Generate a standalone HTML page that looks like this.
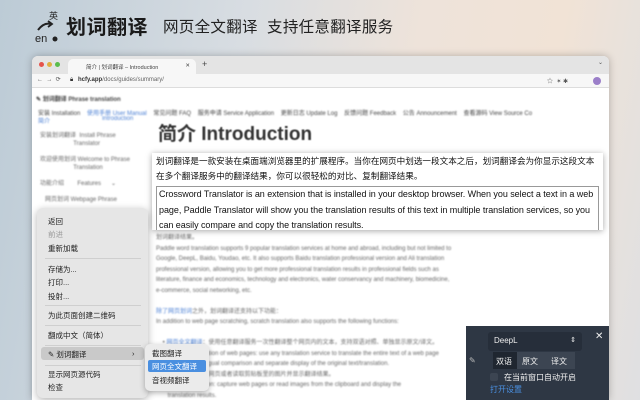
<!DOCTYPE html>
<html><head><meta charset="utf-8"><style>
*{margin:0;padding:0;box-sizing:border-box}
body{width:640px;height:400px;overflow:hidden;position:relative;font-family:"Liberation Sans","Noto Sans CJK SC",sans-serif;
background:linear-gradient(100deg,#bccbd6 0%,#d8dde2 35%,#eee3da 60%,#f1e3d6 80%,#dfe0e2 100%)}
.abs{position:absolute}
.title{left:66px;top:11px;font-size:20px;font-weight:bold;color:#1a1a1a;letter-spacing:0.5px}
.sub{left:163px;top:15px;font-size:15.5px;color:#222;letter-spacing:0.3px}
.win{left:32px;top:56px;width:577px;height:344px;background:#fff;border-radius:6px 6px 0 0;overflow:hidden;box-shadow:0 0 8px rgba(0,0,0,.25)}
.tabbar{position:absolute;left:0;top:0;width:100%;height:18px;background:#e4e4e4}
.tab{position:absolute;left:36px;top:3px;width:128px;height:15px;background:#f7f7f7;border-radius:5px 5px 0 0;font-size:5.5px;color:#444;padding:4px 0 0 18px}
.addr{position:absolute;left:0;top:18px;width:100%;height:14px;background:#f7f7f7;border-bottom:1px solid #ddd;font-size:6px;color:#333}
.blur{filter:blur(0.7px);color:#666;font-size:6px}
.box{left:152px;top:153px;width:451px;height:77px;background:#fff;box-shadow:0 1px 6px rgba(0,0,0,.35);font-size:9px;color:#111;line-height:15px;padding:1px 4px;white-space:nowrap;overflow:hidden}
.en{border:1px solid #999;margin-top:2px;padding:0 2px;line-height:15.5px;font-size:9px;letter-spacing:-0.05px}
.menu{left:37px;top:208px;width:111px;height:190px;background:#e6e6e6;border-radius:6px;box-shadow:0 2px 8px rgba(0,0,0,.3);font-size:7.5px;color:#222}
.menu div.i{position:absolute;left:11px}
.sep{position:absolute;left:8px;width:96px;height:1px;background:#cfcfcf}
.submenu{left:145px;top:344px;width:64px;height:47px;background:#ebebeb;border-radius:5px;box-shadow:0 2px 6px rgba(0,0,0,.3);font-size:7.5px;color:#222}
.panel{left:466px;top:326px;width:143px;height:74px;background:#2e3744;color:#eee;font-size:8px}
</style></head><body>
<svg class="abs" style="left:34px;top:10px" width="30" height="34" viewBox="0 0 30 34"><path d="M4 20 Q10 12 17 14" stroke="#222" stroke-width="2" fill="none"/><path d="M14 11 L18 14 L14 17" stroke="#222" stroke-width="1.8" fill="none"/><text x="15" y="9" font-size="9" fill="#222" font-family="Noto Sans CJK SC">英</text><text x="1" y="32" font-size="11" fill="#222" font-family="Liberation Sans">en</text><circle cx="21" cy="29" r="2.5" fill="#222"/></svg>
<div class="abs title">划词翻译</div>
<div class="abs sub">网页全文翻译&nbsp; 支持任意翻译服务</div>
<div class="abs win">
 <div class="tabbar">
  <span class="abs" style="left:7px;top:6px;width:5px;height:5px;border-radius:50%;background:#e5534b"></span>
  <span class="abs" style="left:15px;top:6px;width:5px;height:5px;border-radius:50%;background:#e0b040"></span>
  <span class="abs" style="left:23px;top:6px;width:5px;height:5px;border-radius:50%;background:#5bbd4c"></span>
  <div class="tab">简介 | 划词翻译 – Introduction<span style="position:absolute;right:6px">✕</span></div>
  <span class="abs" style="left:170px;top:3px;font-size:9px;color:#444">+</span>
  <span class="abs" style="right:6px;top:3px;font-size:6px;color:#555">⌄</span>
 </div>
 <div class="addr">
  <span class="abs" style="left:5px;top:2px;color:#555">←&nbsp; →&nbsp; ⟳</span>
  <span class="abs" style="left:38px;top:3px">🔒︎</span>
  <span class="abs" style="left:46px;top:3px"><b>hcfy.app</b><span style="color:#666">/docs/guides/summary/</span></span>
  <span class="abs" style="left:515px;top:2px;color:#555">☆ &nbsp;✶ ✱</span>
  <span class="abs" style="left:561px;top:3px;width:8px;height:8px;border-radius:50%;background:#9b7fc9"></span>
 </div>
 <div class="abs blur" style="left:4px;top:38px;color:#444"><b>✎ 划词翻译 Phrase translation</b></div>
 <div class="abs blur" style="left:6px;top:52px;width:570px;white-space:nowrap;color:#444">安装 Installation&nbsp;&nbsp;&nbsp; <span style="color:#4a7fd4">使用手册 User Manual</span>&nbsp;&nbsp;&nbsp; 常见问题 FAQ&nbsp;&nbsp;&nbsp; 服务申请 Service Application&nbsp;&nbsp;&nbsp; 更新日志 Update Log&nbsp;&nbsp;&nbsp; 反馈问题 Feedback&nbsp;&nbsp;&nbsp; 公告 Announcement&nbsp;&nbsp;&nbsp; 查看源码 View Source Co</div>
 <div class="abs blur" style="left:6px;top:60px;color:#4a7fd4">简介</div>
 <div class="abs blur" style="left:70px;top:60px;color:#4a7fd4">Introduction</div>
 <div class="abs blur" style="left:8px;top:76px;line-height:8px;width:100px">安装划词翻译&nbsp; Install Phrase<br>&nbsp;&nbsp;&nbsp;&nbsp;&nbsp;&nbsp;&nbsp;&nbsp;&nbsp;&nbsp;&nbsp;&nbsp;&nbsp;&nbsp;&nbsp;&nbsp;&nbsp;&nbsp;&nbsp; Translator<br><br>欢迎使用划词 Welcome to Phrase<br>&nbsp;&nbsp;&nbsp;&nbsp;&nbsp;&nbsp;&nbsp;&nbsp;&nbsp;&nbsp;&nbsp;&nbsp;&nbsp;&nbsp;&nbsp;&nbsp;&nbsp;&nbsp;&nbsp; Translation<br><br>功能介绍&nbsp;&nbsp;&nbsp;&nbsp;&nbsp;&nbsp;&nbsp; Features&nbsp;&nbsp;&nbsp;&nbsp;&nbsp; ⌄<br><br>&nbsp;&nbsp; 网页划词 Webpage Phrase</div>
 <div class="abs" style="left:126px;top:63px;font-size:19px;font-weight:bold;color:#333;filter:blur(0.5px)">简介 Introduction</div>
 <div class="abs blur" style="left:124px;top:177px;line-height:10.5px;width:450px">划词翻译结果。<br>Paddle word translation supports 9 popular translation services at home and abroad, including but not limited to<br>Google, DeepL, Baidu, Youdao, etc. It also supports Baidu translation professional version and Ali translation<br>professional version, allowing you to get more professional translation results in professional fields such as<br>literature, finance and economics, technology and electronics, water conservancy and machinery, biomedicine,<br>e-commerce, social networking, etc.<br><br><span style="color:#4a7fd4">除了网页划词</span>之外，划词翻译还支持以下功能：<br>In addition to web page scratching, scratch translation also supports the following functions:<br><br>&nbsp;&nbsp;&nbsp; • <span style="color:#4a7fd4">网页全文翻译</span>：使用任意翻译服务一次性翻译整个网页内的文本，支持双语对照、单独显示原文/译文。<br>&nbsp;&nbsp;&nbsp;&nbsp;&nbsp;&nbsp; Full-text translation of web pages: use any translation service to translate the entire text of a web page<br>&nbsp;&nbsp;&nbsp;&nbsp;&nbsp;&nbsp; supporting bilingual comparison and separate display of the original text/translation.<br>&nbsp;&nbsp;&nbsp; • <span style="color:#4a7fd4">截图翻译</span>：截取网页或者读取剪贴板里的图片并显示翻译结果。<br>&nbsp;&nbsp;&nbsp;&nbsp;&nbsp;&nbsp; Image translation: capture web pages or read images from the clipboard and display the<br>&nbsp;&nbsp;&nbsp;&nbsp;&nbsp;&nbsp; translation results.</div>
</div>
<div class="abs box"><span style="font-size:8.6px">划词翻译是一款安装在桌面端浏览器里的扩展程序。当你在网页中划选一段文本之后，划词翻译会为你显示这段文本</span><br><span style="font-size:8.6px">在多个翻译服务中的翻译结果，你可以很轻松的对比、复制翻译结果。</span>
<div class="en">Crossword Translator is an extension that is installed in your desktop browser. When you select a text in a web<br>page, Paddle Translator will show you the translation results of this text in multiple translation services, so you<br>can easily compare and copy the translation results.</div></div>
<div class="abs menu">
 <div class="i" style="top:8px">返回</div>
 <div class="i" style="top:21px;color:#999">前进</div>
 <div class="i" style="top:35px">重新加载</div>
 <div class="sep" style="top:50px"></div>
 <div class="i" style="top:56px">存储为...</div>
 <div class="i" style="top:69px">打印...</div>
 <div class="i" style="top:83px">投射...</div>
 <div class="sep" style="top:97px"></div>
 <div class="i" style="top:102px">为此页面创建二维码</div>
 <div class="sep" style="top:117px"></div>
 <div class="i" style="top:122px">翻成中文（简体）</div>
 <div class="sep" style="top:137px"></div>
 <div style="position:absolute;left:4px;top:139px;width:103px;height:13px;background:#c9c9c9;border-radius:3px"></div>
 <div class="i" style="top:141px">✎ 划词翻译<span style="position:absolute;left:84px">›</span></div>
 <div class="sep" style="top:157px"></div>
 <div class="i" style="top:161px">显示网页源代码</div>
 <div class="i" style="top:174px">检查</div>
</div>
<div class="abs submenu">
 <div class="abs" style="left:7px;top:4px">截图翻译</div>
 <div class="abs" style="left:3px;top:16px;width:58px;height:12px;background:#4a8fe0;border-radius:2px"></div>
 <div class="abs" style="left:7px;top:17px;color:#fff">网页全文翻译</div>
 <div class="abs" style="left:7px;top:31px">音视频翻译</div>
</div>
<div class="abs panel">
 <div class="abs" style="left:22px;top:6px;width:94px;height:19px;background:#262e3a;border-radius:3px;padding:4px 6px;font-size:8px">DeepL<span style="position:absolute;right:6px;font-size:7px">⇕</span></div>
 <div class="abs" style="left:129px;top:5px;font-size:10px">✕</div>
 <div class="abs" style="left:3px;top:30px;font-size:8px;color:#bbb">✎</div>
 <div class="abs" style="left:27px;top:26px;width:24px;height:17px;background:#1f2630;padding:4px 3px">双语</div>
 <div class="abs" style="left:51px;top:26px;width:29px;height:17px;background:#3c4552;padding:4px 5px">原文</div>
 <div class="abs" style="left:80px;top:26px;width:29px;height:17px;background:#3c4552;padding:4px 5px">译文</div>
 <div class="abs" style="left:24px;top:47px;width:8px;height:8px;background:#3c4552;border-radius:2px"></div>
 <div class="abs" style="left:38px;top:46px">在当前窗口自动开启</div>
 <div class="abs" style="left:24px;top:58px;color:#4a90e2">打开设置</div>
</div>
</body></html>
